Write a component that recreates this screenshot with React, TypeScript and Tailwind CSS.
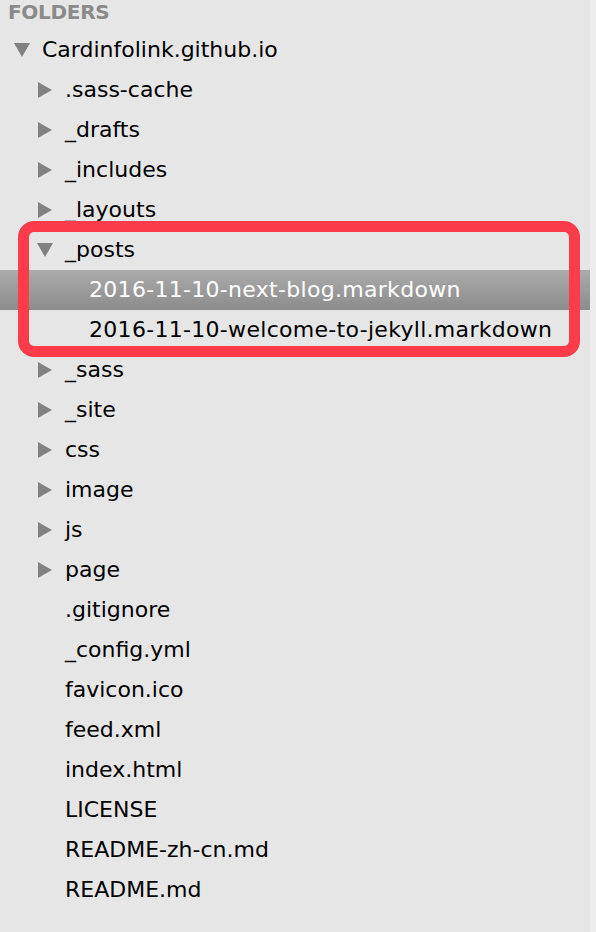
import React from "react";

type Row = { name: string; level: number; kind: "open" | "closed" | "file"; selected?: boolean };

const rows: Row[] = [
  { name: "Cardinfolink.github.io", level: 0, kind: "open" },
  { name: ".sass-cache", level: 1, kind: "closed" },
  { name: "_drafts", level: 1, kind: "closed" },
  { name: "_includes", level: 1, kind: "closed" },
  { name: "_layouts", level: 1, kind: "closed" },
  { name: "_posts", level: 1, kind: "open" },
  { name: "2016-11-10-next-blog.markdown", level: 2, kind: "file", selected: true },
  { name: "2016-11-10-welcome-to-jekyll.markdown", level: 2, kind: "file" },
  { name: "_sass", level: 1, kind: "closed" },
  { name: "_site", level: 1, kind: "closed" },
  { name: "css", level: 1, kind: "closed" },
  { name: "image", level: 1, kind: "closed" },
  { name: "js", level: 1, kind: "closed" },
  { name: "page", level: 1, kind: "closed" },
  { name: ".gitignore", level: 1, kind: "file" },
  { name: "_config.yml", level: 1, kind: "file" },
  { name: "favicon.ico", level: 1, kind: "file" },
  { name: "feed.xml", level: 1, kind: "file" },
  { name: "index.html", level: 1, kind: "file" },
  { name: "LICENSE", level: 1, kind: "file" },
  { name: "README-zh-cn.md", level: 1, kind: "file" },
  { name: "README.md", level: 1, kind: "file" },
];

function Arrow({ kind }: { kind: Row["kind"] }) {
  if (kind === "open")
    return (
      <svg width="16" height="14" viewBox="0 0 16 14" className="shrink-0">
        <polygon points="0,0 16,0 8,14" fill="#808080" />
      </svg>
    );
  if (kind === "closed")
    return (
      <svg width="16" height="16" viewBox="0 0 16 16" className="shrink-0">
        <polygon points="1,0 15,8 1,16" fill="#808080" />
      </svg>
    );
  return <span className="w-[16px] shrink-0" />;
}

const pad = ["pl-[14px]", "pl-[37px]", "pl-[61px]"];

export default function App() {
  return (
    <div
      className="relative w-[596px] h-[932px] overflow-hidden bg-[#e6e6e6] flex"
      style={{ fontFamily: '"DejaVu Sans", "Liberation Sans", sans-serif' }}
    >
      <div className="w-[590px] flex flex-col">
        <div className="h-[30px] pl-[8px] pt-[1px]">
          <span className="block text-[20px] leading-[22px] font-bold text-[#8a8a8a] tracking-[-0.3px]">
            FOLDERS
          </span>
        </div>
        {rows.map((r) => (
          <div
            key={r.name}
            className={`h-[40px] flex items-center gap-[12px] ${pad[r.level]} ${
              r.selected ? "bg-gradient-to-b from-[#ababab] to-[#8c8c8c] text-white" : "text-black"
            }`}
          >
            <Arrow kind={r.kind} />
            <span
              className={`text-[22px] leading-[40px] whitespace-nowrap ${
                r.level === 2 ? "tracking-[0.3px]" : ""
              }`}
            >
              {r.name}
            </span>
          </div>
        ))}
      </div>
      <div className="flex-1 bg-[#ededed]" />
      <div className="absolute left-[18px] top-[221px] w-[562px] h-[136px] border-[11px] border-[#fc3b4b] rounded-[16px]" />
    </div>
  );
}
